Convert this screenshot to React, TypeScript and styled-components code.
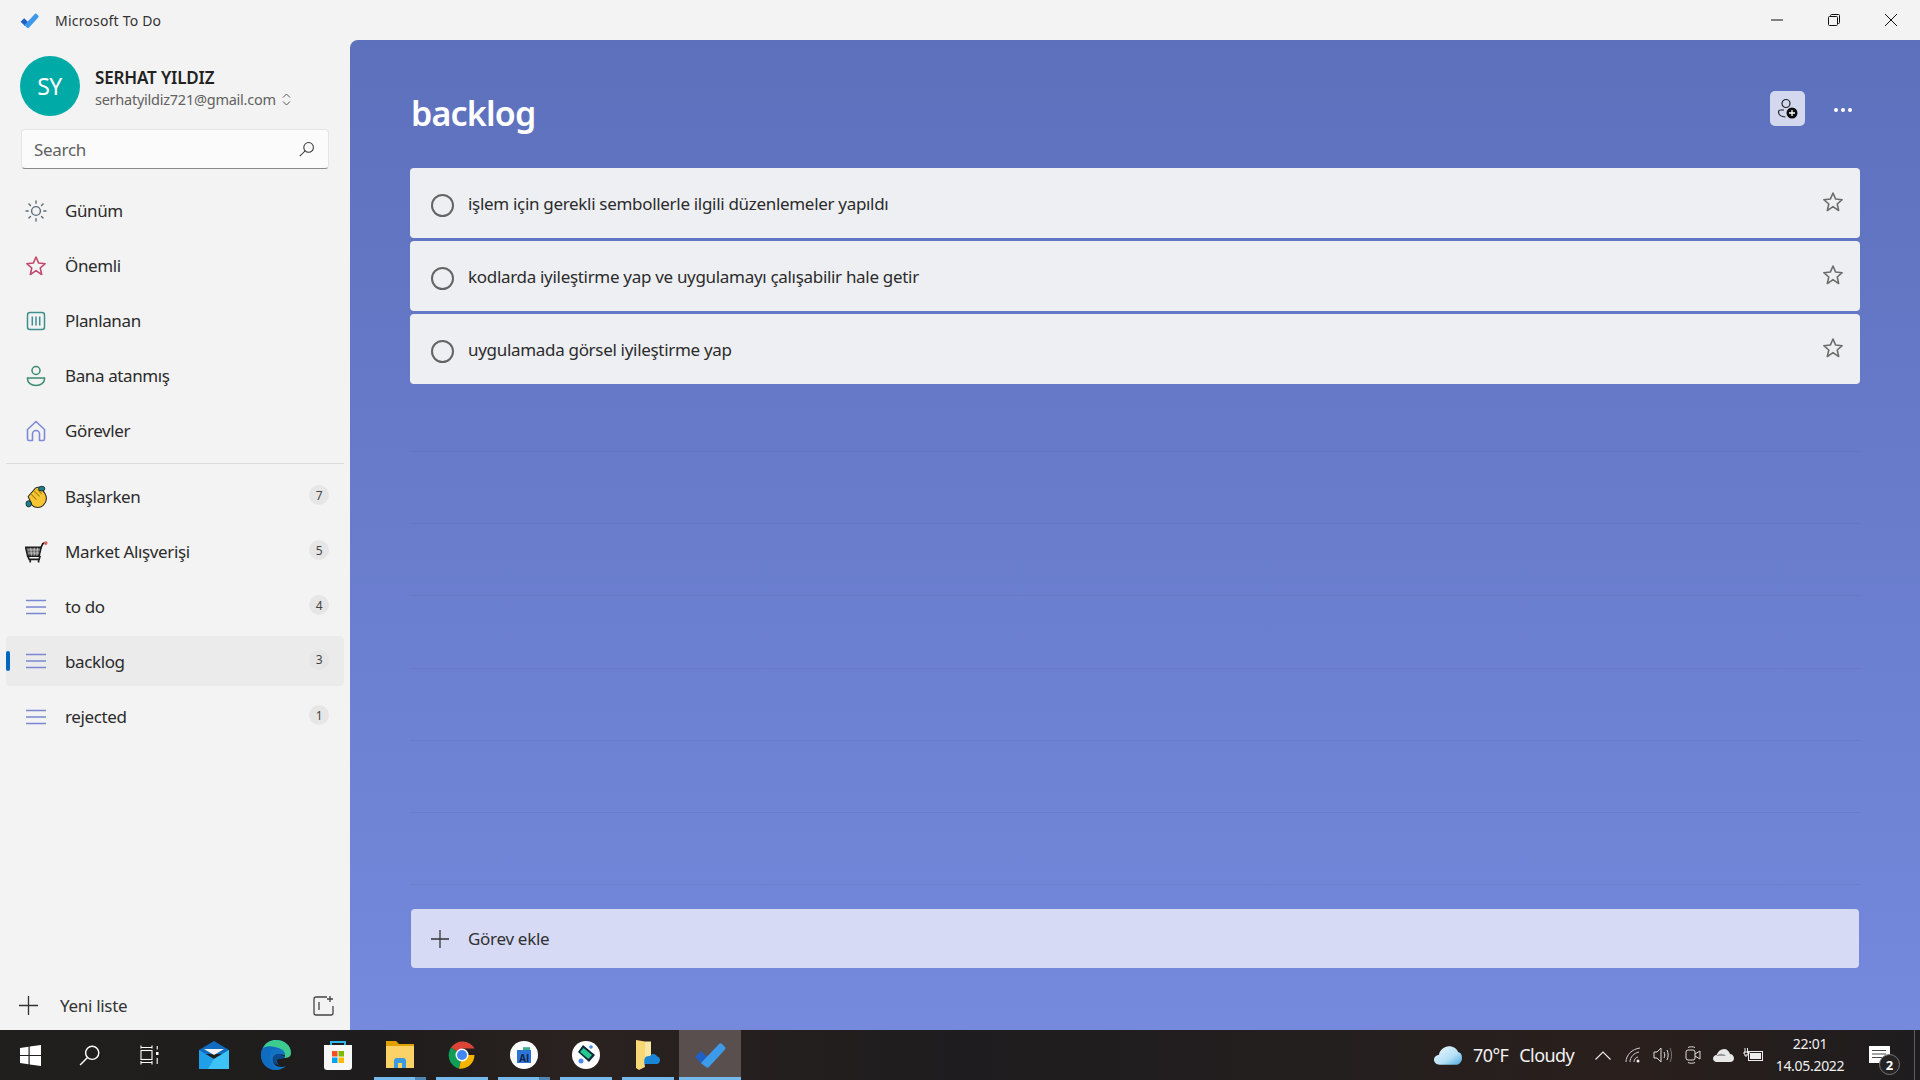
import React from "react";
import styled, { createGlobalStyle } from "styled-components";

const GlobalStyle = createGlobalStyle`
  html, body {
    margin: 0;
    padding: 0;
    height: 100%;
    overflow: hidden;
  }
  body {
    font-family: "Noto Sans", "Open Sans", sans-serif;
    color: #262626;
  }
  * {
    box-sizing: border-box;
  }
`;

const Page = styled.div`
  width: 1920px;
  height: 1080px;
  display: flex;
  flex-direction: column;
  background: #f3f3f3;
`;

const TitleBar = styled.header`
  height: 40px;
  flex: none;
  display: flex;
  align-items: center;
  padding: 0 1px 0 20px;
  font-size: 14px;
  letter-spacing: 0.2px;
  color: #333;
`;

const TitleText = styled.span`
  margin-left: 16px;
  flex: 1;
`;

const WindowButton = styled.div`
  width: 57px;
  height: 40px;
  display: flex;
  align-items: center;
  justify-content: center;
`;

const Body = styled.div`
  flex: 1;
  min-height: 0;
  display: flex;
`;

const Sidebar = styled.aside`
  width: 350px;
  flex: none;
  display: flex;
  flex-direction: column;
  padding: 16px 6px 0;
`;

const Account = styled.div`
  display: flex;
  align-items: center;
  gap: 15px;
  padding-left: 14px;
`;

const Avatar = styled.div`
  width: 60px;
  height: 60px;
  border-radius: 50%;
  background: #00aaa6;
  color: #fff;
  font-size: 23px;
  letter-spacing: -0.5px;
  padding-right: 1px;
  display: flex;
  align-items: center;
  justify-content: center;
`;

const AccountText = styled.div`
  display: flex;
  flex-direction: column;
  margin-top: 4px;
`;

const AccountName = styled.div`
  font-size: 17px;
  line-height: 22px;
  font-weight: 600;
  letter-spacing: -0.15px;
  color: #222;
`;

const AccountMail = styled.div`
  font-size: 14.5px;
  line-height: 20px;
  letter-spacing: -0.25px;
  color: #616161;
  display: flex;
  align-items: center;
  gap: 6px;
`;

const SearchBox = styled.div`
  margin: 13px 15px 0 15px;
  height: 40px;
  flex: none;
  background: #fbfbfb;
  border: 1px solid #e5e5e5;
  border-bottom: 1px solid #8a8a8a;
  border-radius: 4px;
  display: flex;
  align-items: center;
  justify-content: space-between;
  padding: 0 13px 0 12px;
  font-size: 17px;
  letter-spacing: -0.3px;
  color: #616161;
`;

const NavList = styled.nav`
  display: flex;
  flex-direction: column;
  margin-top: 14px;
`;

const NavRow = styled.div<{ $active?: boolean }>`
  position: relative;
  height: ${(p) => (p.$active ? "50px" : "55px")};
  margin: ${(p) => (p.$active ? "2px 0 3px" : "0")};
  display: flex;
  align-items: center;
  border-radius: 4px;
  background: ${(p) => (p.$active ? "#ebebeb" : "transparent")};
  padding: 0 15px 0 18px;
  font-size: 17px;
  letter-spacing: -0.38px;
  color: #2b2b2b;
`;

const ActiveMark = styled.span`
  position: absolute;
  left: 0;
  top: 15px;
  width: 4px;
  height: 20px;
  border-radius: 2px;
  background: #0067c0;
`;

const NavIcon = styled.span`
  width: 24px;
  height: 24px;
  flex: none;
  display: flex;
  align-items: center;
  justify-content: center;
  margin-right: 17px;
`;

const NavLabel = styled.span`
  flex: 1;
`;

const Badge = styled.span`
  width: 20px;
  height: 20px;
  border-radius: 50%;
  background: #e6e6e6;
  font-size: 12px;
  color: #444;
  display: flex;
  align-items: center;
  justify-content: center;
  margin-top: -3px;
`;

const NavDivider = styled.hr`
  border: none;
  border-top: 1px solid #dcdcdc;
  margin: 5px 0;
  height: 0;
`;

const SidebarFooter = styled.div`
  margin-top: auto;
  height: 49px;
  display: flex;
  align-items: center;
  padding: 0 10px 0 13px;
  font-size: 17px;
  letter-spacing: -0.3px;
  color: #333;
`;

const FooterLabel = styled.span`
  flex: 1;
  margin-left: 22px;
`;

const Main = styled.main`
  flex: 1;
  min-width: 0;
  display: flex;
  flex-direction: column;
  border-top-left-radius: 8px;
  background: linear-gradient(180deg, #5d70bc 0%, #7589dd 100%);
  padding: 0 60px 0 60px;
`;

const MainHeader = styled.div`
  height: 128px;
  flex: none;
  display: flex;
  align-items: flex-start;
  padding-top: 52px;
`;

const Heading = styled.h1`
  flex: 1;
  margin: 0;
  padding-left: 1px;
  font-size: 34px;
  line-height: 42px;
  font-weight: 600;
  letter-spacing: -0.8px;
  color: #fff;
`;

const ShareButton = styled.div`
  width: 35px;
  height: 35px;
  margin-top: -1px;
  border-radius: 5px;
  background: #d3d8ef;
  display: flex;
  align-items: center;
  justify-content: center;
`;

const MoreButton = styled.div`
  width: 20px;
  height: 35px;
  margin: 0 7px 0 28.5px;
  display: flex;
  align-items: center;
  justify-content: center;
  gap: 3px;
`;

const Dot = styled.span`
  width: 4px;
  height: 4px;
  border-radius: 50%;
  background: #fff;
`;

const TaskList = styled.div`
  display: flex;
  flex-direction: column;
  gap: 3px;
  flex: none;
`;

const TaskRow = styled.div`
  height: 70px;
  border-radius: 4px;
  background: #eeeff3;
  display: flex;
  align-items: center;
  padding: 0 16px 0 21px;
  font-size: 17px;
  letter-spacing: -0.31px;
  color: #2b2b2b;

  & > svg {
    margin-top: -2px;
  }
`;

const TaskCircle = styled.span`
  width: 23px;
  height: 23px;
  flex: none;
  border: 2px solid #646464;
  border-radius: 50%;
  margin: 4px 14px 0 0;
`;

const TaskLabel = styled.span`
  flex: 1;
`;

const BlankLines = styled.div`
  display: flex;
  flex-direction: column;
  flex: none;
`;

const BlankLine = styled.div`
  height: 72.2px;
  border-bottom: 1px solid rgba(60, 70, 130, 0.11);

  &:first-child {
    height: 68px;
  }
`;

const AddTask = styled.div`
  margin: 24px 1px 0;
  height: 59px;
  flex: none;
  border-radius: 4px;
  background: #d6daf5;
  display: flex;
  align-items: center;
  padding: 0 20px;
  font-size: 17px;
  letter-spacing: -0.3px;
  color: #303030;
`;

const AddLabel = styled.span`
  margin-left: 19px;
`;

const Taskbar = styled.footer`
  height: 50px;
  flex: none;
  display: flex;
  align-items: stretch;
  color: #fff;
  background: linear-gradient(90deg, #211e1e 0%, #1f1c1d 20%, #2a221f 30%, #1e1c1e 50%, #241f1f 70%, #2a1f1c 85%, #1e1c1e 100%);
`;

const SystemSlot = styled.div`
  width: 60px;
  display: flex;
  align-items: center;
  justify-content: center;
`;

const AppSlots = styled.div`
  display: flex;
  margin-left: 3px;
  flex: 1;
`;

const AppSlot = styled.div<{ $active?: boolean }>`
  position: relative;
  width: 62px;
  display: flex;
  align-items: center;
  justify-content: center;
  background: ${(p) => (p.$active ? "#5a4f4f" : "transparent")};
`;

const RunningBar = styled.span<{ $active?: boolean; $stacked?: boolean }>`
  position: absolute;
  bottom: 0;
  left: ${(p) => (p.$active ? "0" : "5px")};
  right: ${(p) => (p.$active ? "0" : "5px")};
  height: 3px;
  background: ${(p) =>
    p.$stacked
      ? "linear-gradient(90deg, #76b9ed 0 78%, #4f86b3 78% 100%)"
      : "#76b9ed"};
`;

const Tray = styled.div`
  display: flex;
  align-items: center;
`;

const Weather = styled.div`
  display: flex;
  align-items: center;
  font-size: 18px;
  letter-spacing: -0.6px;
  color: #f2f2f2;
  margin-right: 14px;
`;

const WeatherValue = styled.span`
  margin-left: 11px;
`;

const WeatherText = styled.span`
  margin-left: 11px;
`;

const TrayIcon = styled.span`
  width: 30px;
  height: 50px;
  display: flex;
  align-items: center;
  justify-content: center;
`;

const Clock = styled.div`
  width: 86px;
  padding-right: 2px;
  text-align: center;
  font-size: 14px;
  line-height: 22px;
  letter-spacing: -0.3px;
  color: #f0f0f0;
`;

const Notification = styled.div`
  position: relative;
  width: 50px;
  height: 50px;
  display: flex;
  align-items: center;
  justify-content: center;
`;

const NotificationCount = styled.span`
  position: absolute;
  left: 25px;
  top: 24px;
  width: 21px;
  height: 21px;
  border-radius: 50%;
  border: 1px solid #777;
  background: #262324;
  font-size: 13px;
  font-weight: 700;
  display: flex;
  align-items: center;
  justify-content: center;
`;

const ShowDesktop = styled.span`
  width: 1px;
  height: 50px;
  background: #5c5c5c;
  margin: 0 5px 0 10px;
`;

const TodoLogo = ({ size }: { size: number }) => (
  <svg width={size} height={size} viewBox="0 0 32 32">
    <path d="M1 18l6-6 7 7-6 6z" fill="#1e60c4" />
    <path d="M8 25l-1-1L25 5c1-1 2-1 3 0l3 3c.6.8.6 1.6 0 2.4L15 28c-1 1-2 1-3 0z" fill="#3d9ae8" />
  </svg>
);

const StarIcon = ({ color, size }: { color: string; size: number }) => (
  <svg width={size} height={size} viewBox="0 0 24 24" fill="none" stroke={color} strokeWidth="1.7" strokeLinejoin="round">
    <path d="M12 2.2l2.9 6.6 7.1.7-5.4 4.7 1.6 7.1L12 17l-6.2 4.3 1.6-7.1L2 9.5l7.1-.7z" />
  </svg>
);

const ListLinesIcon = () => (
  <svg width="22" height="16" viewBox="0 0 22 16" stroke="#7a88d2" strokeWidth="1.4">
    <path d="M1 1.5h20M1 8h20M1 14.5h20" />
  </svg>
);

const SunIcon = () => (
  <svg width="22" height="22" viewBox="0 0 22 22" fill="none" stroke="#5d6b7a" strokeWidth="1.4" strokeLinecap="round">
    <circle cx="11" cy="11" r="4.4" />
    <path d="M11 1v2.2M11 18.8V21M1 11h2.2M18.8 11H21M3.9 3.9l1.6 1.6M16.5 16.5l1.6 1.6M3.9 18.1l1.6-1.6M16.5 5.5l1.6-1.6" />
  </svg>
);

const PlannedIcon = () => (
  <svg width="20" height="20" viewBox="0 0 20 20" fill="none" stroke="#3f8f90" strokeWidth="1.5">
    <rect x="1.5" y="1.5" width="17" height="17" rx="2.5" />
    <path d="M6.3 5.5v9M10 5.5v9M13.7 5.5v9" />
  </svg>
);

const PersonIcon = () => (
  <svg width="20" height="22" viewBox="0 0 20 22" fill="none" stroke="#3b8a6f" strokeWidth="1.5">
    <circle cx="10" cy="5.500" r="4" />
    <path d="M1.500 13h17v1c0 3.500-3.600 6.500-8.500 6.500s-8.500-3-8.500-6.500z" />
  </svg>
);

const HomeIcon = () => (
  <svg width="20" height="22" viewBox="0 0 20 22" fill="none" stroke="#7c8bd6" strokeWidth="1.6" strokeLinejoin="round">
    <path d="M1.500 9.500L10 1.500l8.500 8v9.500a1.500 1.500 0 0 1-1.500 1.500h-3.500v-6.500a3.500 3.500 0 0 0-7 0v6.500H3a1.500 1.500 0 0 1-1.500-1.500z" />
  </svg>
);

const HandIcon = () => (
  <svg width="23" height="24" viewBox="0 0 22 23">
    <path d="M3 11L10 3c2-1.500 5-1 6 .5l3 4.500c2 3.500 2 8-1.500 11.500C14 22.500 9 22 6.500 19z" fill="#f7c531" stroke="#2b2b20" strokeWidth="1" />
    <path d="M6 9l5 5M9 6l5 5M12 4.500l4 4" stroke="#a97d0c" strokeWidth="1" />
    <ellipse cx="16" cy="3.500" rx="3" ry="2.300" fill="#1b7f8f" stroke="#111" strokeWidth=".7" />
    <ellipse cx="3.500" cy="18" rx="2.600" ry="3" fill="#1b7f8f" stroke="#111" strokeWidth=".7" />
  </svg>
);

const CartIcon = () => (
  <svg width="23" height="22" viewBox="0 0 22 21">
    <path d="M.5 6h15l-2 8.500h-11z" fill="#5f5f5f" stroke="#1c1c1c" strokeWidth="1.400" />
    <path d="M2.500 8.500h11.500M3 11.500h10.500M5.500 6.500l.7 7.500M8.800 6.500v7.500M12 6.500l-.6 7.500" stroke="#d8d8d8" strokeWidth=".7" />
    <path d="M15 7l2-4.500 2-.8M2.500 14l1.500 3.500h9.500l1-3.500M5 17.500v3M13 17.500v3" stroke="#1c1c1c" strokeWidth="1.600" fill="none" />
    <circle cx="19.800" cy="2" r="1.800" fill="#d9635a" />
  </svg>
);

const PlusIcon = ({ size, color }: { size: number; color: string }) => (
  <svg width={size} height={size} viewBox="0 0 20 20" stroke={color} strokeWidth="1.400">
    <path d="M10 0v20M0 10h20" />
  </svg>
);

const SearchIcon = ({ size, color }: { size: number; color: string }) => (
  <svg width={size} height={size} viewBox="0 0 20 20" fill="none" stroke={color} strokeWidth="1.300">
    <circle cx="12" cy="8" r="6" />
    <path d="M7.500 12.500L1 19" />
  </svg>
);

const WinLogo = () => (
  <svg width="21" height="21" viewBox="0 0 21 21" fill="#fff">
    <path d="M0 3l8.500-1.200v8.100H0zM9.700 1.600L21 0v9.900H9.700zM0 11.100h8.500v8.100L0 18zM9.700 11.100H21V21L9.700 19.400z" />
  </svg>
);

const TaskViewIcon = () => (
  <svg width="20" height="20" viewBox="0 0 20 20" fill="none" stroke="#fff" strokeWidth="1.100">
    <rect x="1" y="5.500" width="11" height="9" />
    <path d="M1 2.500h11M1 17.500h11M12 .5v3M1 .5v3M12 16v3.500M1 16v3.500" />
    <rect x="16" y="7" width="2.500" height="3" fill="#fff" stroke="none" />
    <path d="M17.200 1v3.500M17.200 13v6" />
  </svg>
);

const MailIcon = () => (
  <svg width="30" height="28" viewBox="0 0 30 28">
    <path d="M0 9L15 0l15 9v4H0z" fill="#0f6cc0" />
    <path d="M5 8h20l-10 6z" fill="#f4f4f4" />
    <path d="M0 9l15 9 15-9v19H0z" fill="#1e9fe8" />
    <path d="M15 18l15-9v19H9z" fill="#3dc2f5" />
  </svg>
);

const EdgeIcon = () => (
  <svg width="30" height="30" viewBox="0 0 30 30">
    <path d="M15 0C6 0 0 7 0 15c0 9 7 15 15 15 4 0 8-2 10-4-5 2-12 1-13-5-1-4 2-7 6-7s6 3 12-1C30 6 24 0 15 0z" fill="#1474c4" />
    <path d="M2 8C5 2 10 0 15 0c9 0 15 6 15 13 0 4-3 5-7 5 2-3 1-7-3-9-6-3-14-1-18-1z" fill="#3ecb8e" />
    <path d="M12 21c0-6 3-7 6-7 3 0 4 2 6 3-2 2-4 2-6 2-2 0-3 2 0 6-3-.500-6-2-6-4z" fill="#0b4a8e" />
    <path d="M2 8c5-3 11-2 16 1-6-1-10 3-9 10 0 4 3 8 6 11C6 30 0 23 0 15c0-3 1-5 2-7z" fill="#0f6cc0" />
  </svg>
);

const StoreIcon = () => (
  <svg width="30" height="30" viewBox="0 0 30 30">
    <path d="M8 5V2h14v3" fill="none" stroke="#2fb4ef" strokeWidth="2" />
    <path d="M1 5h28v22a3 3 0 0 1-3 3H4a3 3 0 0 1-3-3z" fill="#f7f7f7" />
    <rect x="9" y="11" width="5.500" height="5.500" fill="#f25022" />
    <rect x="15.500" y="11" width="5.500" height="5.500" fill="#7fba00" />
    <rect x="9" y="17.500" width="5.500" height="5.500" fill="#00a4ef" />
    <rect x="15.500" y="17.500" width="5.500" height="5.500" fill="#ffb900" />
  </svg>
);

const FilesIcon = () => (
  <svg width="28" height="30" viewBox="0 0 28 30">
    <path d="M0 1h10l3 3h15v4H0z" fill="#e0a000" />
    <path d="M0 6h28v22H0z" fill="#fbd268" />
    <path d="M8 28v-7a3 3 0 0 1 3-3h6a3 3 0 0 1 3 3v7h-4v-5h-4v5z" fill="#3b9ae0" />
  </svg>
);

const ChromeIcon = () => (
  <svg width="28" height="28" viewBox="0 0 28 28">
    <path d="M14 14L3 6.500A14 14 0 0 1 26.500 7.500H14z" fill="#db4437" />
    <path d="M14 14L3 6.500A14 14 0 0 0 11 27.700z" fill="#0f9d58" />
    <path d="M14 14h12.500A14 14 0 0 1 11 27.700z" fill="#f4b400" />
    <circle cx="14" cy="14" r="6.500" fill="#fff" />
    <circle cx="14" cy="14" r="5" fill="#4285f4" />
  </svg>
);

const AiIcon = () => (
  <svg width="28" height="28" viewBox="0 0 28 28">
    <circle cx="14" cy="14" r="14" fill="#fff" />
    <path d="M7 9h6V6.500h7V9h1v13H7z" fill="#2c74d6" />
    <path d="M13 6.500h7V9h-7z" fill="#3fae8c" />
    <text x="14" y="21" textAnchor="middle" fontSize="10" fontWeight="700" fill="#0d2240" fontFamily="Liberation Sans">AI</text>
  </svg>
);

const CashIcon = () => (
  <svg width="28" height="28" viewBox="0 0 28 28">
    <circle cx="14" cy="14" r="14" fill="#fff" />
    <path d="M11 4l12 10-6 7L6 11z" fill="#0c2a3a" />
    <path d="M11.500 7l8.500 7-3.500 4-8.500-7z" fill="#25c88e" />
    <circle cx="9" cy="20" r="2.500" fill="#4b8ef0" />
    <circle cx="19" cy="6" r="1.800" fill="#4b8ef0" />
  </svg>
);

const FolderCloudIcon = () => (
  <svg width="24" height="30" viewBox="0 0 24 30">
    <path d="M0 0l9 1.500V27L3 30 0 28z" fill="#f8d775" />
    <path d="M9 1.500h6V21H9z" fill="#fbe6a3" />
    <path d="M9 27c-2-8 0-11 4-11h1c2-3 6-2.500 7 .5 2 0 3 2 3 3.500S23 24 21 24H9z" fill="#1a86d8" />
  </svg>
);

const WeatherCloud = () => (
  <svg width="28" height="20" viewBox="0 0 29 20">
    <defs>
      <linearGradient id="cloudFill" x1="0" y1="0" x2="1" y2="1">
        <stop offset="0" stopColor="#eef8fe" />
        <stop offset="0.6" stopColor="#b5e0f7" />
        <stop offset="1" stopColor="#4da9e0" />
      </linearGradient>
    </defs>
    <path d="M6 20C2 20 0 17.500 0 15s2-5 5-5c1-6 7-10 12-9 4 .7 7 3 8 6 2.500.5 4 2.500 4 6 0 4-3 7-6 7z" fill="url(#cloudFill)" />
  </svg>
);

const APP_SLOTS = [
  { icon: <MailIcon /> },
  { icon: <EdgeIcon /> },
  { icon: <StoreIcon /> },
  { icon: <FilesIcon />, running: true, stacked: true },
  { icon: <ChromeIcon />, running: true },
  { icon: <AiIcon />, running: true, stacked: true },
  { icon: <CashIcon />, running: true },
  { icon: <FolderCloudIcon />, running: true },
  { icon: <TodoLogo size={32} />, running: true, active: true },
];

const SMART_LISTS = [
  { label: "Günüm", icon: <SunIcon /> },
  { label: "Önemli", icon: <StarIcon color="#c0476e" size={22} /> },
  { label: "Planlanan", icon: <PlannedIcon /> },
  { label: "Bana atanmış", icon: <PersonIcon /> },
  { label: "Görevler", icon: <HomeIcon /> },
];

const USER_LISTS = [
  { label: "Başlarken", count: 7, icon: <HandIcon /> },
  { label: "Market Alışverişi", count: 5, icon: <CartIcon /> },
  { label: "to do", count: 4, icon: <ListLinesIcon /> },
  { label: "backlog", count: 3, icon: <ListLinesIcon />, active: true },
  { label: "rejected", count: 1, icon: <ListLinesIcon /> },
];

const TASKS = [
  "işlem için gerekli sembollerle ilgili düzenlemeler yapıldı",
  "kodlarda iyileştirme yap ve uygulamayı çalışabilir hale getir",
  "uygulamada görsel iyileştirme yap",
];

export default function App() {
  return (
    <Page>
      <GlobalStyle />
      <TitleBar>
        <TodoLogo size={19} />
        <TitleText>Microsoft To Do</TitleText>
        <WindowButton>
          <svg width="12" height="2" stroke="#111"><path d="M0 1h12" /></svg>
        </WindowButton>
        <WindowButton>
          <svg width="12" height="12" viewBox="0 0 12 12" fill="none" stroke="#111">
            <rect x=".5" y="2.500" width="9" height="9" rx="1" />
            <path d="M2.500 2.500V1.500a1 1 0 0 1 1-1h7a1 1 0 0 1 1 1v7a1 1 0 0 1-1 1h-1" />
          </svg>
        </WindowButton>
        <WindowButton>
          <svg width="12" height="12" stroke="#111"><path d="M0 0l12 12M12 0L0 12" /></svg>
        </WindowButton>
      </TitleBar>
      <Body>
        <Sidebar>
          <Account>
            <Avatar>SY</Avatar>
            <AccountText>
              <AccountName>SERHAT YILDIZ</AccountName>
              <AccountMail>
                serhatyildiz721@gmail.com
                <svg width="9" height="13" viewBox="0 0 9 13" fill="none" stroke="#555" strokeWidth="1">
                  <path d="M1 4.500L4.500 1 8 4.500M1 8.500L4.500 12 8 8.500" />
                </svg>
              </AccountMail>
            </AccountText>
          </Account>
          <SearchBox>
            Search
            <SearchIcon size={16} color="#333" />
          </SearchBox>
          <NavList>
            {SMART_LISTS.map((item) => (
              <NavRow key={item.label}>
                <NavIcon>{item.icon}</NavIcon>
                <NavLabel>{item.label}</NavLabel>
              </NavRow>
            ))}
            <NavDivider />
            {USER_LISTS.map((item) => (
              <NavRow key={item.label} $active={item.active}>
                {item.active && <ActiveMark />}
                <NavIcon>{item.icon}</NavIcon>
                <NavLabel>{item.label}</NavLabel>
                <Badge>{item.count}</Badge>
              </NavRow>
            ))}
          </NavList>
          <SidebarFooter>
            <PlusIcon size={19} color="#333" />
            <FooterLabel>Yeni liste</FooterLabel>
            <svg width="21" height="21" viewBox="0 0 21 21" fill="none" stroke="#444" strokeWidth="1.300">
              <path d="M14 2H3a2 2 0 0 0-2 2v14a2 2 0 0 0 2 2h15a2 2 0 0 0 2-2V11" />
              <path d="M6 7v8M17 1v6M14 4h6" />
            </svg>
          </SidebarFooter>
        </Sidebar>
        <Main>
          <MainHeader>
            <Heading>backlog</Heading>
            <ShareButton>
              <svg width="21" height="21" viewBox="0 0 21 21" fill="none">
                <circle cx="9" cy="5.500" r="4" stroke="#222" strokeWidth="1.200" />
                <path d="M7 12H3.500A2 2 0 0 0 1.500 14c0 3 3 5 7 5" stroke="#222" strokeWidth="1.200" />
                <circle cx="15" cy="15" r="5.500" fill="#0b0b0b" />
                <path d="M15 12v6M12 15h6" stroke="#fff" strokeWidth="1.300" />
              </svg>
            </ShareButton>
            <MoreButton>
              <Dot />
              <Dot />
              <Dot />
            </MoreButton>
          </MainHeader>
          <TaskList>
            {TASKS.map((task) => (
              <TaskRow key={task}>
                <TaskCircle />
                <TaskLabel>{task}</TaskLabel>
                <StarIcon color="#6b6b6b" size={22} />
              </TaskRow>
            ))}
          </TaskList>
          <BlankLines>
            {[0, 1, 2, 3, 4, 5, 6].map((n) => (
              <BlankLine key={n} />
            ))}
          </BlankLines>
          <AddTask>
            <PlusIcon size={18} color="#333" />
            <AddLabel>Görev ekle</AddLabel>
          </AddTask>
        </Main>
      </Body>
      <Taskbar>
        <SystemSlot><WinLogo /></SystemSlot>
        <SystemSlot><SearchIcon size={22} color="#fff" /></SystemSlot>
        <SystemSlot><TaskViewIcon /></SystemSlot>
        <AppSlots>
          {APP_SLOTS.map((slot, i) => (
            <AppSlot key={i} $active={slot.active}>
              {slot.icon}
              {slot.running && <RunningBar $active={slot.active} $stacked={slot.stacked} />}
            </AppSlot>
          ))}
        </AppSlots>
        <Tray>
          <Weather>
            <WeatherCloud />
            <WeatherValue>70°F</WeatherValue>
            <WeatherText>Cloudy</WeatherText>
          </Weather>
          <TrayIcon>
            <svg width="16" height="9" viewBox="0 0 16 9" fill="none" stroke="#eee" strokeWidth="1.100"><path d="M.5 8.500L8 1l7.500 7.500" /></svg>
          </TrayIcon>
          <TrayIcon>
            <svg width="16" height="16" viewBox="0 0 16 16" fill="none" stroke="#ccc" strokeWidth="1"><path d="M1 15C1 8 7 2 15 1M5 15c0-5 4-9 9-10M9 15c0-2.500 1.500-4.500 4-5" /><circle cx="13" cy="14" r="1.500" fill="#eee" stroke="none" /></svg>
          </TrayIcon>
          <TrayIcon>
            <svg width="20" height="16" viewBox="0 0 20 16" fill="none" stroke="#ddd" strokeWidth="1"><path d="M1 5h3l4-4v14l-4-4H1zM11 5c1 2 1 4 0 6M14 3c1.500 3 1.500 7 0 10" /><path d="M17 1c2 4 2 10 0 14" stroke="#777" /></svg>
          </TrayIcon>
          <TrayIcon>
            <svg width="16" height="18" viewBox="0 0 16 18" fill="none" stroke="#ddd" strokeWidth="1"><rect x="1" y="4" width="9" height="10" rx="2" /><path d="M10 8l5-3v8l-5-3M3 1.500c2-1 5-1 7 0M3 16.500c2 1 5 1 7 0" /></svg>
          </TrayIcon>
          <TrayIcon>
            <svg width="21" height="13" viewBox="0 0 21 13"><path d="M4 13c-3 0-4-2-4-3.500S1.500 6 3.500 6C5 2 8 0 11 0c3 0 5 2 6 5 2 0 4 2 4 4.500S19 13 17 13z" fill="#e8e8e8" /><path d="M3 7c4-3 7-3 10 0z" fill="#999" /></svg>
          </TrayIcon>
          <TrayIcon>
            <svg width="21" height="14" viewBox="0 0 21 14" fill="none" stroke="#eee"><rect x="5.500" y="3.500" width="14" height="9" /><rect x="7" y="5" width="11" height="6" fill="#eee" stroke="none" /><path d="M2 0v5M4.500 0v5M1 4h5v2H4v2H2V6H1z" strokeWidth="1" /></svg>
          </TrayIcon>
          <Clock>
            22:01
            <br />
            14.05.2022
          </Clock>
          <Notification>
            <svg width="21" height="18" viewBox="0 0 21 18"><path d="M0 0h21v17H0z" fill="#fff" /><path d="M3 4.500h14M3 8h14M3 11.500h10" stroke="#333" strokeWidth=".9" /></svg>
            <NotificationCount>2</NotificationCount>
          </Notification>
          <ShowDesktop />
        </Tray>
      </Taskbar>
    </Page>
  );
}
